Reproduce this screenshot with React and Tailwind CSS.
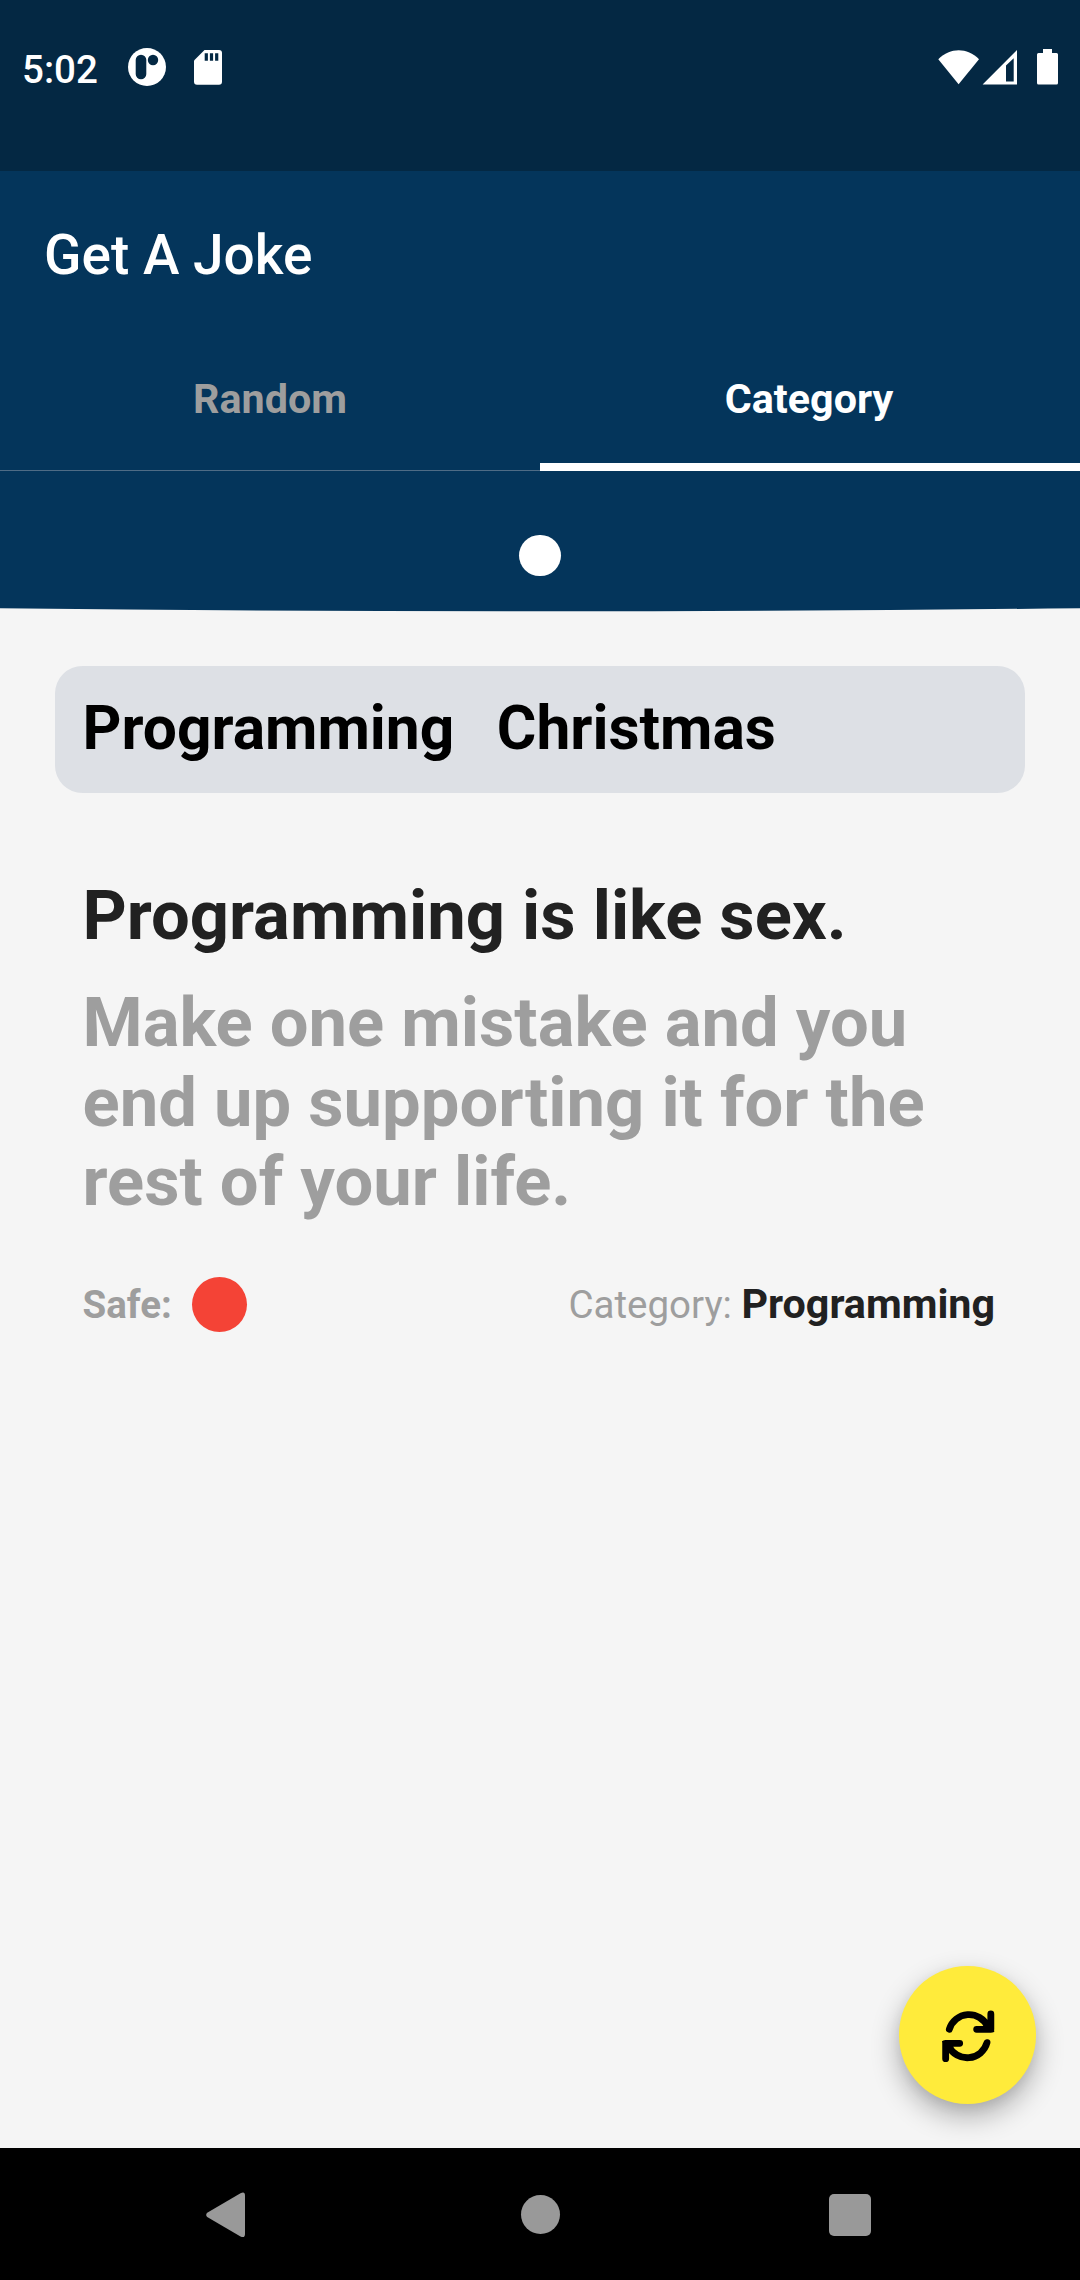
const StatusIcons = () => (
  <div className="flex items-center">
    <svg className="h-[36px] w-[80px]" viewBox="0 0 80 36" fill="#fff">
      <path d="M.3 10.2C12.4-1.6 29-1.6 41 10.2L20.6 35.2Z" />
      <path fillRule="evenodd" d="M44.6 35.500 79 1V35.500ZM68 16.500V32.600H75.700V9.300Z" />
    </svg>
    <svg className="ml-[19px] h-[36px] w-[21px]" viewBox="0 0 21 36" fill="#fff">
      <path d="M6 0H15V4H19.500Q21 4 21 5.500V34Q21 35.500 19.500 35.500H1.500Q0 35.500 0 34V5.500Q0 4 1.500 4H6Z" />
    </svg>
  </div>
);

const StatusBar = () => (
  <div className="h-[171px] bg-[#042843]">
    <div className="flex h-[134px] items-center pr-[22px] pl-[22px] text-white">
      <span className="w-[106.200px] pt-[5px] text-[38.5px] leading-[46px] font-medium">5:02</span>
      <svg className="h-[38px] w-[38px]" viewBox="0 0 38 38">
        <circle cx="19" cy="19" r="19" fill="#fff" />
        <rect x="7.700" y="6.700" width="10.600" height="24.600" rx="5.300" fill="#042843" />
        <circle cx="25" cy="12" r="5.200" fill="#042843" />
      </svg>
      <svg className="ml-[28px] h-[35px] w-[28px]" viewBox="0 0 28 35">
        <path d="M10.500 0H25Q28 0 28 3V31.500Q28 34.700 25 34.700H3Q0 34.700 0 31.500V10.500Z" fill="#fff" />
        <path d="M10.700 3.300h3.200v7.400h-3.200zM15.900 3.300h3.200v7.400h-3.200zM21.100 3.300h3.200v7.400h-3.200z" fill="#042843" />
      </svg>
      <div className="ml-auto">
        <StatusIcons />
      </div>
    </div>
  </div>
);

const Header = () => (
  <header>
    <div className="bg-[#04355b]">
      <div className="flex h-[168px] items-center pl-[44px]">
        <h1 className="text-[55px] leading-[64px] font-medium text-white">Get A Joke</h1>
      </div>
      <nav className="grid h-[132px] grid-cols-2 text-[41.25px] leading-[48px] font-bold">
        <button className="flex items-center justify-center border-b border-[#4f6c86] pb-[11px] text-[#9e9e9e]">
          Random
        </button>
        <button className="flex items-center justify-center border-b-8 border-white pr-[2px] pb-[4px] text-white">
          Category
        </button>
      </nav>
      <div className="flex h-[137px] justify-center pt-[63.500px]">
        <span className="size-[41.250px] rounded-full bg-white" />
      </div>
    </div>
    <svg className="block h-[4px] w-full" viewBox="0 0 1080 4" preserveAspectRatio="none">
      <path d="M0 0V.2Q540 6.400 1080 .2V0Z" fill="#04355b" />
    </svg>
  </header>
);

const JokeCard = () => (
  <main className="flex-1 px-[55px] pt-[54px]">
    <div className="flex h-[127px] items-center gap-[42.500px] rounded-[27.500px] bg-[#dde0e5] px-[27.500px] pb-[3px] text-[60.500px] leading-[71px] font-bold text-black">
      <span>Programming</span>
      <span>Christmas</span>
    </div>
    <div className="px-[27.500px] pt-[82.500px]">
      <h2 className="text-[68.750px] leading-[80px] font-bold text-[#212121]">Programming is like sex.</h2>
      <p className="mt-[27.500px] text-[68.750px] leading-[79.500px] font-bold text-[#9e9e9e]">
        Make one mistake and you
        <br />
        end up supporting it for the
        <br />
        rest of your life.
      </p>
      <div className="mt-[55px] flex items-center justify-between">
        <div className="flex items-center text-[38.500px] leading-[45px] font-bold text-[#9e9e9e]">
          Safe:
          <span className="ml-[20.700px] size-[55px] rounded-full bg-[#f44336]" />
        </div>
        <p className="pr-[2.500px] text-[38.500px] leading-[48px] text-[#9e9e9e]">
          Category: <b className="text-[41.250px] font-bold text-[#212121]">Programming</b>
        </p>
      </div>
    </div>
  </main>
);

const RefreshButton = () => (
  <button className="absolute right-[44px] bottom-[44.200px] flex size-[137.500px] items-center justify-center rounded-full bg-[#ffeb3b] shadow-[0_12px_28px_rgba(0,0,0,0.3),0_4px_12px_rgba(0,0,0,0.06)]">
    <svg
      className="mt-px ml-px size-[54px]"
      viewBox="241 237 162 162"
      fill="none"
      stroke="#000"
      strokeWidth="20.500"
      strokeLinecap="round"
      strokeLinejoin="round"
    >
      <path d="M266 298A61.500 61.500 0 0 1 381 290M390.500 252V298H348" />
      <path d="M379 338A61.500 61.500 0 0 1 264 348M255 386V340H297" />
      <path d="M396 303.500H398M248 335H247" strokeWidth="6" />
    </svg>
  </button>
);

const NavigationBar = () => (
  <footer className="flex h-[132px] items-center bg-black pt-px">
    <svg className="ml-[206px] h-[46px] w-[39px]" viewBox="0 0 39 46" fill="#999">
      <path d="M1.200 20.800 34.500 1.200Q39-1 39 3.500V42Q39 46.500 34.500 44.500L1.200 25Q-.8 22.900 1.200 20.800Z" />
    </svg>
    <span className="ml-[276px] size-[39px] rounded-full bg-[#999]" />
    <span className="ml-[269px] size-[42px] rounded-[5px] bg-[#999]" />
  </footer>
);

export default function App() {
  return (
    <div className="flex h-[2280px] w-[1080px] flex-col overflow-hidden bg-[#f5f5f5] font-['Roboto',sans-serif]">
      <StatusBar />
      <div className="relative flex flex-1 flex-col">
        <Header />
        <JokeCard />
        <RefreshButton />
      </div>
      <NavigationBar />
    </div>
  );
}
